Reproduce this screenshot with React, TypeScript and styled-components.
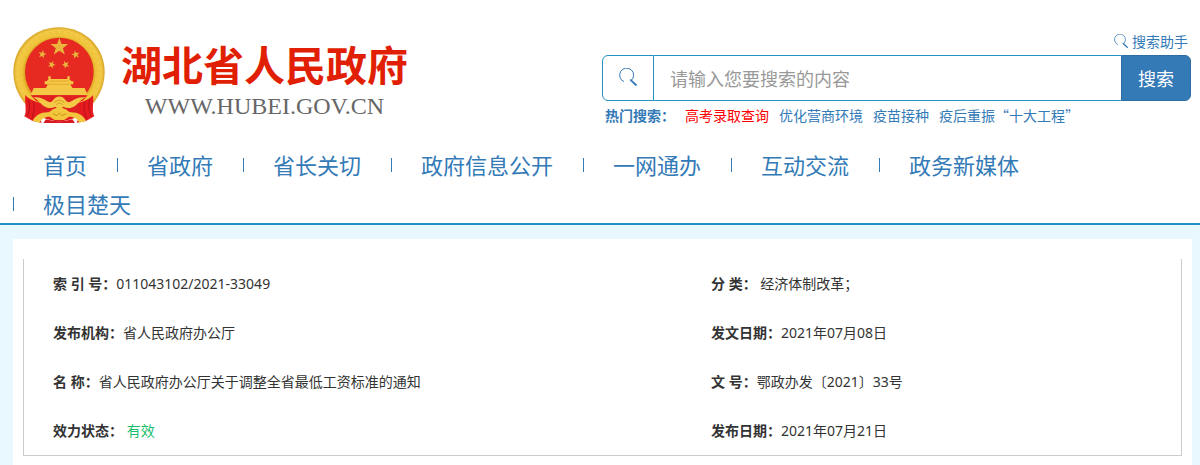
import React from "react";
import styled, { createGlobalStyle } from "styled-components";

const cjk = `"Noto Sans CJK SC", "Noto Sans", sans-serif`;
const latin = `"Noto Sans", "Noto Sans CJK SC", sans-serif`;
const blue = "#337ab7";
const line = "#2490c4";

const GlobalStyle = createGlobalStyle`
  *, *::before, *::after { box-sizing: border-box; }
  body { margin: 0; background: #e9f7fe; color: #333; font: 14px/20px ${cjk}; }
  a { color: ${blue}; text-decoration: none; }
  ul, dl, dd, h1, p { margin: 0; padding: 0; list-style: none; }
`;

const Header = styled.header`
  background: #fff;
  border-bottom: 2px solid ${line};
`;

const Top = styled.div`
  display: grid;
  grid-template-columns: 1fr 1fr;
  padding: 27px 9px 0 13px;
`;

const Brand = styled.a`
  display: flex;
  align-items: flex-start;
  gap: 16px;
`;

const BrandText = styled.div`
  display: flex;
  flex-direction: column;
  gap: 3px;
  align-items: center;
  padding-top: 12px;
`;

const SiteName = styled.h1`
  color: #e11f05;
  font-size: 41px;
  font-weight: 700;
  line-height: 48px;
  white-space: nowrap;
`;

const SiteUrl = styled.p`
  color: #666;
  font: 24px/32px "Liberation Serif", serif;
`;

const SearchArea = styled.div`
  display: flex;
  flex-direction: column;
  padding-top: 4px;
`;

const Helper = styled.a`
  display: flex;
  align-items: center;
  align-self: flex-end;
  gap: 4px;
  padding-right: 3px;
  margin-bottom: 4px;
`;

const SearchForm = styled.form`
  display: flex;
  height: 46px;
`;

const IconCell = styled.label`
  display: flex;
  flex: 0 0 52px;
  align-items: center;
  justify-content: center;
  padding-bottom: 2px;
  border: 1px solid ${line};
  border-radius: 6px 0 0 6px;
`;

const SearchInput = styled.input`
  flex: 1;
  min-width: 0;
  padding: 0 16px;
  border: 1px solid ${line};
  border-width: 1px 0;
  background: #fff;
  color: #555;
  font: 18px/24px ${cjk};
  outline: none;
  &::placeholder { color: #999; opacity: 1; }
`;

const SearchButton = styled.button`
  padding: 0 16px;
  border: 1px solid #2e6da4;
  border-radius: 0 6px 6px 0;
  background: ${blue};
  color: #fff;
  font: 18px/24px ${cjk};
  cursor: pointer;
`;

const HotSearch = styled.div`
  display: flex;
  flex-wrap: wrap;
  gap: 0 10px;
  padding: 4px 0 0 3px;
  color: ${blue};
`;

const HotLink = styled.a<{ $hot?: boolean }>`
  color: ${(p) => (p.$hot ? "#f00" : blue)};
`;

const NavList = styled.ul`
  display: flex;
  flex-wrap: wrap;
  padding: 20px 13px 0;
`;

const NavItem = styled.li`
  display: flex;
  align-items: center;
  height: 39px;
  &::before {
    content: "";
    width: 1px;
    height: 14px;
    background: ${blue};
  }
  &:first-child::before {
    background: none;
  }
`;

const NavLink = styled.a`
  padding: 0 30px 0 29px;
  font-size: 22px;
  line-height: 39px;
`;

const Panel = styled.main`
  margin: 14px 8px 0 13px;
  padding: 20px 10px 32px;
  background: #fff;
`;

const Details = styled.dl`
  display: grid;
  grid-template-columns: 7fr 5fr;
  padding: 0 0 0 29px;
  border: 1px solid #ccc;
  border-top: 0;
`;

const Detail = styled.div`
  display: flex;
  align-items: center;
  height: 49px;
  white-space: pre;
  font-family: ${latin};
`;

const Term = styled.dt`
  font-weight: 700;
`;

const Value = styled.dd<{ $state?: "valid" }>`
  color: ${(p) => (p.$state === "valid" ? "#19be6b" : "inherit")};
`;

function Magnifier({ size }: { size: number }) {
  return (
    <svg width={size} height={size} viewBox="0 0 18 18" fill="none" stroke={blue} aria-hidden="true">
      <path d="M5 13.6A7 7 0 1 1 12 12.6" strokeWidth="1" />
      <path d="M11.8 12.2 17 17" strokeWidth="1.8" strokeLinecap="round" />
    </svg>
  );
}

function starPoints(cx: number, cy: number, r: number, turn = 0) {
  return Array.from({ length: 10 }, (_, i) => {
    const radius = i % 2 ? r * 0.4 : r;
    const a = ((i * 36 - 90 + turn) * Math.PI) / 180;
    return `${(cx + radius * Math.cos(a)).toFixed(1)},${(cy + radius * Math.sin(a)).toFixed(1)}`;
  }).join(" ");
}

function Emblem() {
  return (
    <svg width="92" height="97" viewBox="39 35 276 291" role="img" aria-label="国徽">
      <defs>
        <radialGradient id="ring" gradientUnits="userSpaceOnUse" cx="177" cy="172" r="138">
          <stop offset="0.74" stopColor="#d9a01d" />
          <stop offset="0.8" stopColor="#f0c43a" />
          <stop offset="0.92" stopColor="#f3cb48" />
          <stop offset="1" stopColor="#d6a123" />
        </radialGradient>
      </defs>
      <path d="M177 36C253 36 314 94 314 170C314 218 292 255 262 282L92 282C62 255 40 218 40 170C40 94 101 36 177 36Z" fill="url(#ring)" />
      <g fill="none" stroke="#e2b035" strokeWidth="2" strokeDasharray="5 13">
        <path d="M82 252A124 124 0 1 1 272 252" />
        <path d="M91 238A112 112 0 1 1 263 238" strokeDashoffset="8" />
      </g>
      <circle cx="178" cy="170" r="103" fill="#e62a22" />
      <g fill="#e9b53c">
        <polygon points={starPoints(178, 95, 28)} />
        <polygon points={starPoints(127, 117, 13, 12)} />
        <polygon points={starPoints(227, 118, 13, -12)} />
        <polygon points={starPoints(155, 148, 12, 24)} />
        <polygon points={starPoints(197, 148, 12, -24)} />
      </g>
      <g fill="#f4c746">
        <path d="M145 183H152V191H202V183H209V193L215 198H220V207H213V213H142V207H134V198H139L145 193Z" />
        <path d="M101 218H254L263 240H92Z" />
        <path d="M141 212H214L218 219H137Z" />
      </g>
      <path d="M149 197H205M142 207H213" stroke="#df9d29" strokeWidth="2" />
      <path d="M92 240H263L248 256L204 270L178 260L151 270L108 256Z" fill="#e0201f" />
      <path d="M76 239C88 254 111 260 128 264C142 282 140 294 119 306L125 322L98 317L73 303C82 286 73 264 76 239Z" fill="#e51b20" />
      <path d="M279 239C267 254 245 260 228 264C214 282 216 294 237 306L230 322L258 317L283 303C274 286 282 264 279 239Z" fill="#e51b20" />
      <path d="M86 252C91 275 87 291 82 303M101 260C105 280 101 295 95 311M269 252C264 275 268 291 274 303M254 260C250 280 254 295 260 311" fill="none" stroke="#b8121a" strokeWidth="3" />
      <path d="M116 265Q178 231 240 265L231 305Q178 330 124 305Z" fill="#de2020" />
      <path d="M99 246C119 244 130 250 142 258C154 266 160 252 166 247C173 242 183 242 190 247C196 252 202 266 214 258C226 250 237 244 257 246C243 252 238 262 226 271C212 281 200 278 190 274C182 280 174 280 166 274C156 278 144 281 130 271C118 262 113 252 99 246Z" fill="#f3c945" />
      <path d="M163 262Q178 247 193 262M168 269Q178 257 188 269" fill="none" stroke="#d79e25" strokeWidth="3" />
      <path d="M98 317C106 300 124 290 145 291C153 289 155 281 164 280C171 273 185 273 192 280C201 281 203 289 211 291C232 290 250 300 258 317L238 322C232 308 219 304 207 304L192 314H164L149 304C137 304 126 308 118 322Z" fill="#f2c63d" />
      <path d="M138 312Q177 324 217 312L225 323H130Z" fill="#d71b20" />
      <path d="M158 295L171 301L178 293L186 301L199 295" fill="none" stroke="#cf941b" strokeWidth="3" />
    </svg>
  );
}

const navItems = ["首页", "省政府", "省长关切", "政府信息公开", "一网通办", "互动交流", "政务新媒体", "极目楚天"];
const hotItems = ["高考录取查询", "优化营商环境", "疫苗接种", "疫后重振“十大工程”"];

const details: { term: string; value: string; state?: "valid" }[] = [
  { term: "索 引 号：", value: "011043102/2021-33049" },
  { term: "分 类：", value: " 经济体制改革；" },
  { term: "发布机构：", value: "省人民政府办公厅" },
  { term: "发文日期：", value: "2021年07月08日" },
  { term: "名 称：", value: "省人民政府办公厅关于调整全省最低工资标准的通知" },
  { term: "文 号：", value: "鄂政办发〔2021〕33号" },
  { term: "效力状态：", value: " 有效", state: "valid" },
  { term: "发布日期：", value: "2021年07月21日" },
];

export default function App() {
  return (
    <div lang="zh-CN">
      <GlobalStyle />
      <Header>
        <Top>
          <Brand href="#">
            <Emblem />
            <BrandText>
              <SiteName>湖北省人民政府</SiteName>
              <SiteUrl>WWW.HUBEI.GOV.CN</SiteUrl>
            </BrandText>
          </Brand>
          <SearchArea>
            <Helper href="#">
              <Magnifier size={14} />
              搜索助手
            </Helper>
            <SearchForm onSubmit={(e) => e.preventDefault()}>
              <IconCell htmlFor="search" aria-label="搜索">
                <Magnifier size={18} />
              </IconCell>
              <SearchInput id="search" type="text" placeholder="请输入您要搜索的内容" />
              <SearchButton type="submit">搜索</SearchButton>
            </SearchForm>
            <HotSearch>
              <strong>热门搜索：</strong>
              {hotItems.map((item, i) => (
                <HotLink key={item} href="#" $hot={i === 0}>
                  {item}
                </HotLink>
              ))}
            </HotSearch>
          </SearchArea>
        </Top>
        <nav>
          <NavList>
            {navItems.map((item) => (
              <NavItem key={item}>
                <NavLink href="#">{item}</NavLink>
              </NavItem>
            ))}
          </NavList>
        </nav>
      </Header>
      <Panel>
        <Details>
          {details.map(({ term, value, state }) => (
            <Detail key={term}>
              <Term>{term}</Term>
              <Value $state={state}>{value}</Value>
            </Detail>
          ))}
        </Details>
      </Panel>
    </div>
  );
}
